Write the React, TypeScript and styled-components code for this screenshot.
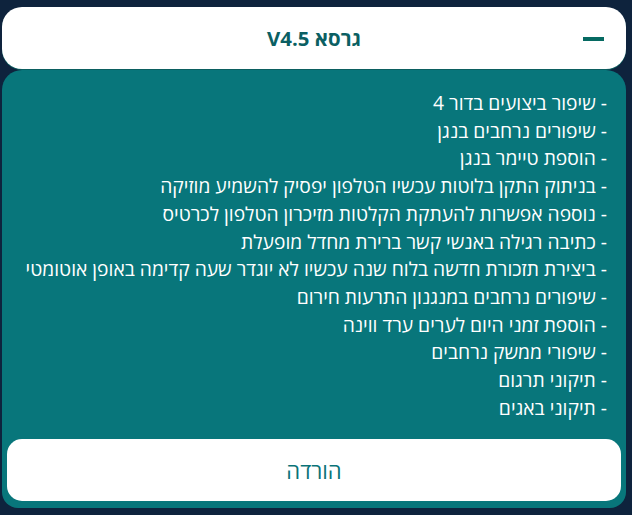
import React from "react";
import styled, { createGlobalStyle } from "styled-components";

const GlobalStyle = createGlobalStyle`
    html, body {
        margin: 0;
        padding: 0;
        background: #0e233d;
    }
    body {
        font-family: "Open Sans", "DejaVu Sans", sans-serif;
    }
`;

const Page = styled.div`
    width: 632px;
    height: 515px;
    box-sizing: border-box;
    padding: 7px 6px 0 2px;
    display: flex;
    flex-direction: column;
    direction: rtl;
`;

const Header = styled.div`
    height: 62px;
    background: #ffffff;
    border-radius: 20px;
    box-shadow: 0 1px 0 #0b5e60;
    display: flex;
    align-items: center;
    justify-content: center;
    position: relative;
    z-index: 1;
`;

const Title = styled.div`
    font-family: "Open Sans", "DejaVu Sans", sans-serif;
    font-weight: 700;
    font-size: 20.4px;
    color: #0b5f63;
`;

const Collapse = styled.div`
    position: absolute;
    right: 22px;
    top: 30px;
    width: 21px;
    height: 4px;
    background: #066a62;
`;

const Body = styled.div`
    margin-top: 1px;
    height: 438px;
    background: #08767b;
    border-radius: 20px 20px 16px 16px;
    box-sizing: border-box;
    padding: 19px 5px 7px;
    display: flex;
    flex-direction: column;
`;

const List = styled.ul`
    list-style: none;
    margin: 0;
    padding: 0 14px;
    flex: 1;
`;

const Item = styled.li`
    color: #ffffff;
    font-size: 19.25px;
    line-height: 27.7px;
    text-align: right;
    white-space: nowrap;
`;

const Download = styled.button`
    height: 62px;
    border: none;
    border-radius: 15px;
    background: #ffffff;
    color: #0a7378;
    font-family: "Open Sans", "DejaVu Sans", sans-serif;
    font-size: 22px;
    cursor: pointer;
`;

const changes = [
    "שיפור ביצועים בדור 4",
    "שיפורים נרחבים בנגן",
    "הוספת טיימר בנגן",
    "בניתוק התקן בלוטות עכשיו הטלפון יפסיק להשמיע מוזיקה",
    "נוספה אפשרות להעתקת הקלטות מזיכרון הטלפון לכרטיס",
    "כתיבה רגילה באנשי קשר ברירת מחדל מופעלת",
    "ביצירת תזכורת חדשה בלוח שנה עכשיו לא יוגדר שעה קדימה באופן אוטומטי",
    "שיפורים נרחבים במנגנון התרעות חירום",
    "הוספת זמני היום לערים ערד ווינה",
    "שיפורי ממשק נרחבים",
    "תיקוני תרגום",
    "תיקוני באגים",
];

export default function App() {
    return (
        <>
            <GlobalStyle />
            <Page>
                <Header>
                    <Title>גרסא V4.5</Title>
                    <Collapse />
                </Header>
                <Body>
                    <List>
                        {changes.map((c) => (
                            <Item key={c}>- {c}</Item>
                        ))}
                    </List>
                    <Download>הורדה</Download>
                </Body>
            </Page>
        </>
    );
}
